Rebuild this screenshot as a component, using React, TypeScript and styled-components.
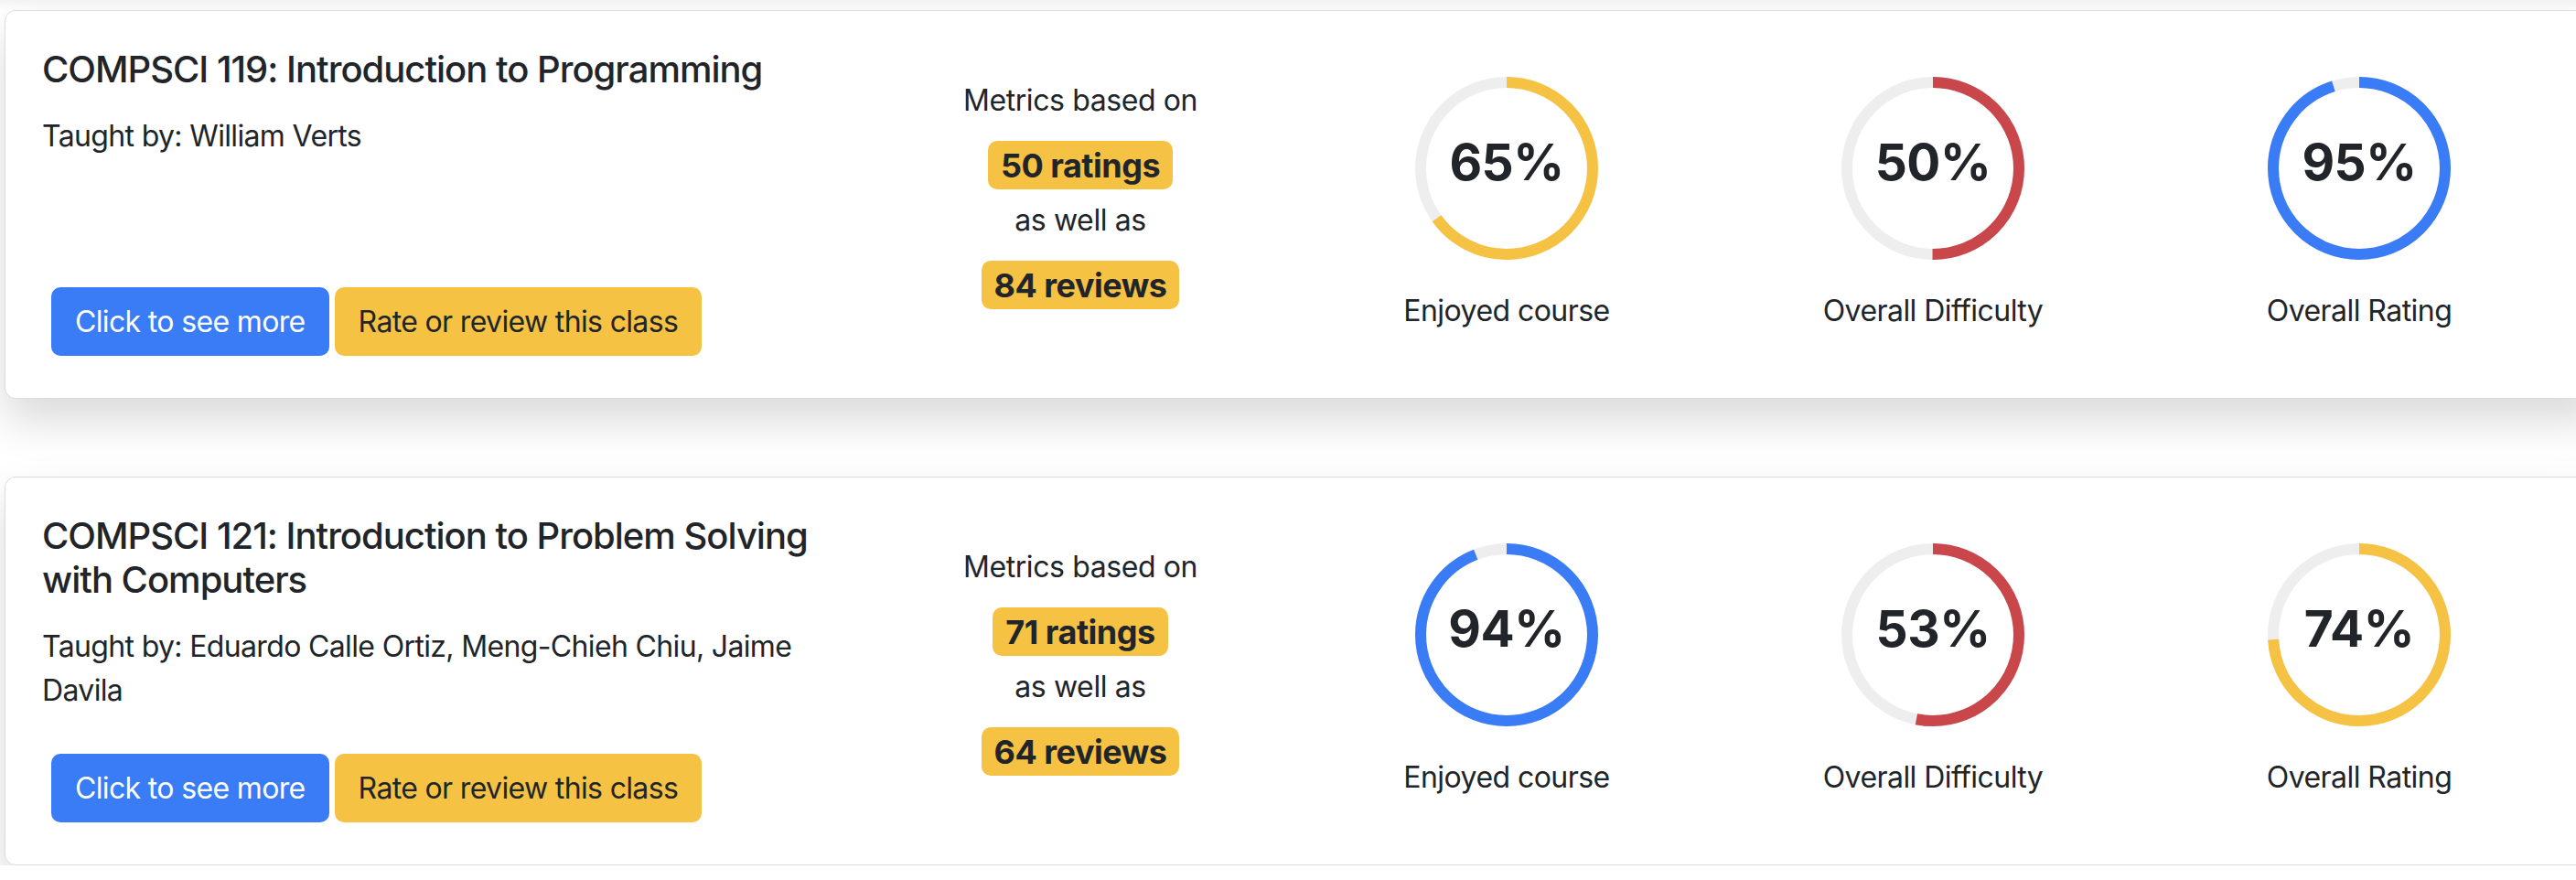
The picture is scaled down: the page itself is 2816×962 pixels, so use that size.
import styled, { createGlobalStyle } from "styled-components";

interface Course
{
    code: string;
    title: string;
    teachers: string;
    ratings: number;
    reviews: number;
    enjoyed: number;
    difficulty: number;
    rating: number;
}

const courses: Course[] = [
    {
        code: "COMPSCI 119",
        title: "Introduction to Programming",
        teachers: "William Verts",
        ratings: 50,
        reviews: 84,
        enjoyed: 65,
        difficulty: 50,
        rating: 95,
    },
    {
        code: "COMPSCI 121",
        title: "Introduction to Problem Solving with Computers",
        teachers: "Eduardo Calle Ortiz, Meng-Chieh Chiu, Jaime Davila",
        ratings: 71,
        reviews: 64,
        enjoyed: 94,
        difficulty: 53,
        rating: 74,
    },
];

const BLUE = "#3a7cf5";
const YELLOW = "#f6c244";
const RED = "#c9464b";

const GlobalStyle = createGlobalStyle`
    html, body {
        margin: 0;
        background: #fff;
        overflow: hidden;
    }
    body {
        font-family: Inter, "Noto Sans", "Liberation Sans", sans-serif;
        color: #212529;
    }
`;

const Page = styled.div`
    display: flex;
    flex-direction: column;
    gap: 85px;
    padding: 11px 0 0 5px;
    background: linear-gradient(#f4f4f4, #fff 11px);
`;

const Card = styled.div`
    box-sizing: border-box;
    width: 2840px;
    height: 425px;
    display: grid;
    grid-template-columns: 902px repeat(4, 466px);
    padding-left: 40px;
    background: #fff;
    border: 1px solid #dcdcdc;
    border-radius: 12px;
    box-shadow: 0 24px 48px rgba(0, 0, 0, 0.15);
`;

const InfoColumn = styled.div`
    display: flex;
    flex-direction: column;
    padding: 40px 0 46px;
`;

const Title = styled.h5`
    margin: 0 0 25px;
    max-width: 880px;
    font-size: 40px;
    line-height: 48px;
    font-weight: 500;
    letter-spacing: -1px;
`;

const Teachers = styled.p`
    margin: 0;
    max-width: 880px;
    font-size: 32px;
    line-height: 48px;
    letter-spacing: -0.65px;
`;

const ButtonRow = styled.div`
    display: flex;
    gap: 6px;
    margin: auto 0 0 10px;
`;

const Button = styled.button<{ $bg: string; $fg: string }>`
    font-family: inherit;
    font-size: 32px;
    line-height: 48px;
    padding: 13.5px 26px;
    border: none;
    border-radius: 10px;
    background: ${p => p.$bg};
    color: ${p => p.$fg};
    letter-spacing: -0.65px;
    cursor: pointer;
`;

const MetricsColumn = styled.div`
    display: flex;
    flex-direction: column;
    align-items: center;
    padding-top: 74px;
`;

const MetricsText = styled.span`
    font-size: 32px;
    line-height: 48px;
    letter-spacing: -0.4px;
`;

const Badge = styled.span`
    display: inline-block;
    margin: 20px 0 10px;
    padding: 8.5px 14px;
    font-size: 36px;
    line-height: 36px;
    font-weight: 700;
    letter-spacing: -0.5px;
    border-radius: 10px;
    background: ${YELLOW};
`;

const GaugeColumn = styled.div`
    display: flex;
    flex-direction: column;
    align-items: center;
    padding-top: 72px;
`;

const Ring = styled.div`
    position: relative;
    width: 200px;
    height: 200px;
`;

const RingValue = styled.div`
    position: absolute;
    inset: 0;
    display: flex;
    align-items: center;
    justify-content: center;
    padding-bottom: 14px;
    box-sizing: border-box;
    font-size: 55px;
    line-height: 1;
    font-weight: 700;
    letter-spacing: -0.5px;
`;

const GaugeLabel = styled.span`
    margin-top: 32px;
    font-size: 32px;
    line-height: 48px;
    letter-spacing: -0.55px;
`;

const Gauge = ( { value, color, label }: { value: number; color: string; label: string } ) =>
{
    const r = 94;
    const length = 2 * Math.PI * r;

    return (
        <GaugeColumn>
            <Ring>
                <svg width="200" height="200" viewBox="0 0 200 200">
                    <circle cx="100" cy="100" r={r} fill="none" stroke="#eeeeee" strokeWidth="12" />
                    <circle
                        cx="100"
                        cy="100"
                        r={r}
                        fill="none"
                        stroke={color}
                        strokeWidth="12"
                        strokeDasharray={`${length * value / 100} ${length}`}
                        transform="rotate(-90 100 100)"
                    />
                </svg>
                <RingValue>{value}%</RingValue>
            </Ring>
            <GaugeLabel>{label}</GaugeLabel>
        </GaugeColumn>
    );
}

const colorFor = ( value: number ) =>
{
    if ( value >= 90 ) return BLUE;
    return YELLOW;
}

const CourseCard = ( { course }: { course: Course } ) =>
{
    return (
        <Card>
            <InfoColumn>
                <Title>{course.code}: {course.title}</Title>
                <Teachers>Taught by: {course.teachers}</Teachers>
                <ButtonRow>
                    <Button $bg={BLUE} $fg="#fff">Click to see more</Button>
                    <Button $bg={YELLOW} $fg="#212529">Rate or review this class</Button>
                </ButtonRow>
            </InfoColumn>
            <MetricsColumn>
                <MetricsText>Metrics based on</MetricsText>
                <Badge>{course.ratings} ratings</Badge>
                <MetricsText>as well as</MetricsText>
                <Badge>{course.reviews} reviews</Badge>
            </MetricsColumn>
            <Gauge value={course.enjoyed} color={colorFor( course.enjoyed )} label="Enjoyed course" />
            <Gauge value={course.difficulty} color={RED} label="Overall Difficulty" />
            <Gauge value={course.rating} color={colorFor( course.rating )} label="Overall Rating" />
        </Card>
    );
}

const App = () =>
{
    return (
        <>
            <GlobalStyle />
            <Page>
                {courses.map( c => <CourseCard key={c.code} course={c} /> )}
            </Page>
        </>
    );
}

export default App;
